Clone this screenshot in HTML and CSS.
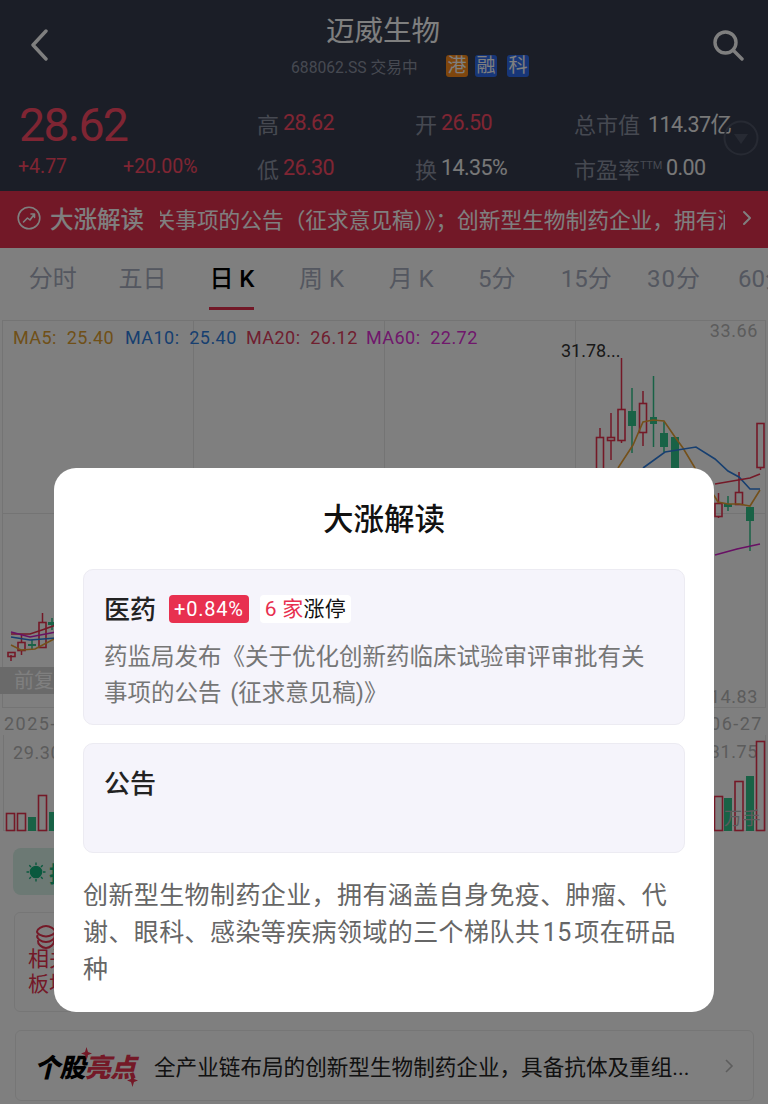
FILE: index.html
```html
<!DOCTYPE html>
<html lang="zh-CN">
  <head>
    <meta charset="UTF-8" />
    <meta name="viewport" content="width=device-width, initial-scale=1.0" />
    <title>迈威生物</title>
    <link rel="stylesheet" href="styles.css">
  </head>
  <body>
    <div class="page">
      <header class="top">
        <div class="nav">
          <svg class="nav-back" width="18" height="32" viewBox="0 0 18 32">
            <path d="M16 2 L3 16 L16 30" />
          </svg>
          <div class="nav-center">
            <div class="stock-name">迈威生物</div>
            <div class="stock-sub">
              <span class="stock-code">688062.SS 交易中</span>
              <span class="tag tag-orange">港</span>
              <span class="tag tag-blue">融</span>
              <span class="tag tag-blue tag-last">科</span>
            </div>
          </div>
          <svg class="nav-search" width="32" height="32" viewBox="0 0 32 32">
            <circle cx="13.5" cy="13.5" r="10.5" />
            <path d="M21 21 L30 30" />
          </svg>
        </div>
        <div class="quote">
          <div class="quote-main">
            <div class="price">28.62</div>
            <div class="change">
              <span>+4.77</span>
              <span>+20.00%</span>
            </div>
          </div>
          <div class="quote-stats">
            <div class="stat"><span class="stat-label">高</span><span class="stat-red">28.62</span></div>
            <div class="stat"><span class="stat-label">开</span><span class="stat-red">26.50</span></div>
            <div class="stat stat-wide"><span class="stat-label">总市值</span><span class="stat-plain">114.37亿</span></div>
            <div class="stat"><span class="stat-label">低</span><span class="stat-red">26.30</span></div>
            <div class="stat"><span class="stat-label">换</span><span class="stat-plain">14.35%</span></div>
            <div class="stat"><span class="stat-label">市盈率<sup class="ttm">TTM</sup></span><span class="stat-plain">0.00</span></div>
          </div>
          <svg class="quote-toggle" width="36" height="36" viewBox="0 0 36 36">
            <circle cx="18" cy="18" r="16.5" />
            <path d="M11 14 H25 L18 24 Z" />
          </svg>
        </div>
      </header>

      <div class="banner">
        <svg class="banner-icon" width="24" height="24" viewBox="0 0 24 24">
          <circle cx="12" cy="12" r="10.8" />
          <path d="M6.5 16 L10.5 12 L13 14 L17 8.5 M14 8 L17.5 8 L17.5 11.5" />
        </svg>
        <span class="banner-title">大涨解读</span>
        <div class="banner-ticker">
          <span class="banner-text">关事项的公告（征求意见稿）》；创新型生物制药企业，拥有涵盖</span>
        </div>
        <svg class="banner-arrow" width="10" height="16" viewBox="0 0 10 16">
          <path d="M2 2 L8 8 L2 14" />
        </svg>
      </div>

      <nav class="tabs">
        <span class="tab">分时</span>
        <span class="tab">五日</span>
        <span class="tab tab-active">日 K</span>
        <span class="tab">周 K</span>
        <span class="tab">月 K</span>
        <span class="tab tab-five">5分</span>
        <span class="tab">15分</span>
        <span class="tab tab-thirty">30分</span>
        <span class="tab">60分</span>
      </nav>

      <!-- viewBox starts at 316 so chart points read as page coordinates -->
      <svg class="chart" width="768" height="520" viewBox="0 316 768 520">
        <g class="grid">
          <rect x="2.5" y="320.5" width="763" height="387" />
          <path d="M193.5 320 V708 M384.5 320 V708 M575.5 320 V708 M2 513.5 H766" />
          <path d="M3.5 735 V830 M765.5 735 V830 M3 830.5 H766" />
        </g>

        <text class="legend ma5" x="13" y="344">MA5:  25.40</text>
        <text class="legend ma10" x="125" y="344">MA10:  25.40</text>
        <text class="legend ma20" x="246" y="344">MA20:  26.12</text>
        <text class="legend ma60" x="366" y="344">MA60:  22.72</text>
        <text class="axis" x="758" y="337" text-anchor="end">33.66</text>
        <text class="peak" x="561" y="357">31.78...</text>
        <text class="axis" x="758" y="703" text-anchor="end">14.83</text>

        <g class="up">
          <path d="M600 428 V437 M600 470 V480 M611 413 V437 M611 440 V460 M621.5 358 V409 M621.5 440 V443 M643 391 V403 M643 432 V446 M718.5 493 V503 M718.5 516 V518 M739 472 V492 M739 504 V505 M760.5 467 V470" />
          <rect x="596.5" y="437.5" width="7" height="42" />
          <rect x="607.5" y="437.5" width="7" height="3" />
          <rect x="618" y="409.5" width="7" height="31" />
          <rect x="639.5" y="403.5" width="7" height="29" />
          <rect x="715" y="503.5" width="7" height="13" />
          <rect x="735.5" y="492.5" width="7" height="12" />
          <rect x="757" y="423.5" width="7" height="44" />
          <path d="M11 655 V661 M21.5 635 V642 M21.5 650 V655 M42.5 613 V622" />
          <rect x="8" y="652.5" width="7" height="4" />
          <rect x="18" y="642.5" width="7" height="8" />
          <rect x="39" y="622.5" width="7" height="25" />
        </g>
        <g class="down">
          <path d="M632 388 V453 M653.5 376 V447 M664 422 V452 M728 496 V511 M750 507 V551 M32 640 V650 M52 618 V630" />
          <rect x="628" y="411" width="8" height="15" />
          <rect x="650" y="417" width="7" height="7" />
          <rect x="660" y="433" width="8" height="14" />
          <rect x="671" y="437" width="8" height="45" />
          <rect x="724" y="504" width="8" height="3" />
          <rect x="746" y="507" width="8" height="14" />
          <rect x="28" y="644" width="8" height="2" />
          <rect x="48" y="622" width="8" height="3" />
        </g>

        <polyline class="line ma5" points="618,468 633,445 643,422 653,420 664,421 675,437 683,448 695,468 715,497 718,502 728,504 739,504 750,506 760,490" />
        <polyline class="line ma10" points="643,468 665,452 696,447 715,459 728,471 739,477 750,489 760,489" />
        <polyline class="line ma20" points="715,484 750,478 760,474" />
        <polyline class="line ma60" points="715,555 737,549 760,544" />
        <polyline class="line ma5" points="11,645 21,650 35,649 56,638" />
        <polyline class="line ma20" points="11,634 30,634 42,630 56,625" />
        <polyline class="line ma10" points="11,637 30,640 56,638" />
        <polyline class="line ma60" points="11,632 30,637 56,632" />

        <rect class="fq-strip" x="0" y="667" width="60" height="27" />
        <text class="fq-text" x="14" y="688">前复权</text>

        <text class="axis date" x="4" y="730">2025-03-11</text>
        <text class="axis date" x="763" y="730" text-anchor="end">06-27</text>
        <text class="axis" x="13" y="759">29.30</text>
        <text class="axis" x="758" y="758" text-anchor="end">31.75</text>

        <g class="up">
          <rect x="6.5" y="813.5" width="8" height="17" />
          <rect x="17.5" y="813.5" width="8" height="17" />
          <rect x="38.5" y="795.5" width="8" height="35" />
          <rect x="714.5" y="796.5" width="8" height="34" />
          <rect x="735" y="781.5" width="8" height="49" />
          <rect x="756.5" y="741.5" width="8" height="89" />
        </g>
        <g class="down">
          <rect x="28" y="817" width="8" height="14" />
          <rect x="49" y="812" width="8" height="19" />
          <rect x="724" y="798" width="8" height="33" />
          <rect x="746" y="776" width="8" height="55" />
        </g>
        <text class="axis" x="724" y="825">万手</text>
      </svg>

      <div class="hint">
        <svg width="20" height="20" viewBox="0 0 20 20">
          <circle cx="10" cy="10" r="5.6" />
          <path d="M10 0.5 V3 M10 17 V19.5 M0.5 10 H3 M17 10 H19.5 M3.3 3.3 L5 5 M15 15 L16.7 16.7 M3.3 16.7 L5 15 M15 5 L16.7 3.3" />
        </svg>
        <span>技术指标</span>
      </div>

      <div class="related">
        <svg width="22" height="26" viewBox="0 0 22 26">
          <path d="M11 2 C15 2 20 5 20 7.5 C20 10 15 12.5 11 12.5 C7 12.5 2 10 2 7.5 C2 5 7 2 11 2 Z" />
          <path d="M2.5 11.5 C1 14 6 18 11 18 C16 18 21 14 19.5 11.5" />
          <path d="M3 17 C2.5 20 7 24 11 24 C15 24 19.5 20 19 17" />
        </svg>
        <div class="related-name">相关<br>板块</div>
      </div>

      <div class="highlight">
        <div class="highlight-logo">
          <span class="logo-black">个股</span><span class="logo-red">亮点</span>
          <svg class="spark spark-a" width="11" height="13" viewBox="0 0 11 13"><path d="M5.5 0 L7 5 L11 6.5 L7 8 L5.5 13 L4 8 L0 6.5 L4 5 Z" /></svg>
          <svg class="spark spark-b" width="11" height="13" viewBox="0 0 11 13"><path d="M5.5 0 L7 5 L11 6.5 L7 8 L5.5 13 L4 8 L0 6.5 L4 5 Z" /></svg>
        </div>
        <span class="highlight-text">全产业链布局的创新型生物制药企业，具备抗体及重组...</span>
        <svg class="highlight-arrow" width="10" height="16" viewBox="0 0 10 16">
          <path d="M2 2 L8 8 L2 14" />
        </svg>
      </div>

      <div class="scrim">
        <div class="modal">
          <h2 class="modal-title">大涨解读</h2>
          <div class="reason reason-sector">
            <div class="reason-head">
              <span class="reason-name">医药</span>
              <span class="pct-badge">+0.84%</span>
              <span class="limit-badge"><em>6 家</em>涨停</span>
            </div>
            <p class="reason-desc">药监局发布《关于优化创新药临床试验审评审批有关事项的公告 (征求意见稿)》</p>
          </div>
          <div class="reason reason-notice">
            <div class="reason-head">
              <span class="reason-name">公告</span>
            </div>
          </div>
          <p class="modal-text">创新型生物制药企业，拥有涵盖自身免疫、肿瘤、代谢、眼科、感染等疾病领域的三个梯队共 15 项在研品种</p>
        </div>
      </div>
    </div>
  </body>
</html>
```
FILE: styles.css
```css
* {
  box-sizing: border-box;
}

body {
  margin: 0;
  background: #fff;
  font-family: Roboto, "Noto Sans CJK SC", sans-serif;
}

.page {
  position: relative;
  width: 768px;
  height: 1104px;
  overflow: hidden;
}

/* header */
.top {
  height: 191px;
  background: #363c4e;
}

.nav {
  display: flex;
  height: 100px;
  padding: 0 24px 0 30px;
}

.nav svg {
  flex-shrink: 0;
  margin-top: 29px;
  fill: none;
  stroke: #fff;
  stroke-width: 3.4;
  stroke-linecap: round;
  stroke-linejoin: round;
}

.nav-center {
  flex: 1;
}

.stock-name {
  padding-left: 6px;
  margin-top: 9px;
  color: #fff;
  font-size: 28.5px;
  line-height: 46px;
  text-align: center;
}

.stock-sub {
  display: flex;
  align-items: center;
  height: 22px;
  margin-left: 243px;
}

.stock-code {
  width: 155px;
  color: #8d93a3;
  font-size: 15.7px;
  white-space: nowrap;
}

.tag {
  width: 22px;
  height: 22px;
  margin-right: 7px;
  border-radius: 3px;
  color: #fff;
  font-size: 19px;
  line-height: 22px;
  text-align: center;
}

.tag-orange {
  background: #ff8c1a;
}

.tag-blue {
  background: #2f6cf0;
}

.tag-last {
  margin-left: 3px;
}

.quote {
  position: relative;
  display: flex;
  height: 91px;
  padding-left: 18px;
}

.quote-main {
  width: 239px;
}

.price {
  padding-left: 1px;
  color: #ff4b66;
  font-size: 46.5px;
  line-height: 50px;
  letter-spacing: -1.7px;
}

.change {
  display: flex;
  gap: 56px;
  color: #ff4b66;
  font-size: 19.5px;
  line-height: 34px;
}

.quote-stats {
  display: grid;
  grid-template-columns: 158px 159px 1fr;
  grid-auto-rows: 45px;
  flex: 1;
  min-width: 0;
  white-space: nowrap;
}

.stat {
  display: flex;
  align-items: center;
  gap: 4px;
  font-size: 21.5px;
  letter-spacing: -0.6px;
}

.stat-wide {
  gap: 8px;
}

.stat-label {
  color: #8d93a3;
  font-size: 22px;
  letter-spacing: 0;
}

.stat-red {
  color: #ff4b66;
}

.stat-plain {
  color: #f0f0f0;
}

.ttm {
  font-size: 11px;
  line-height: 0;
  letter-spacing: -0.3px;
  vertical-align: 9px;
}

.quote-toggle {
  position: absolute;
  top: 20px;
  left: 723px;
  fill: none;
  stroke: #4f5567;
  stroke-width: 2;
}

.quote-toggle path {
  fill: #4f5567;
  stroke: none;
}

/* red strip under the quote */
.banner {
  display: flex;
  align-items: center;
  height: 57px;
  padding: 0 0 3px 17px;
  background: #e4304f;
  color: #fff;
}

.banner svg {
  flex-shrink: 0;
  fill: none;
  stroke: #fff;
  stroke-width: 1.6;
  stroke-linecap: round;
  stroke-linejoin: round;
}

.banner-title {
  margin-left: 9px;
  width: 110px;
  font-size: 23.5px;
  font-weight: 500;
  white-space: nowrap;
}

.banner-ticker {
  width: 565px;
  overflow: hidden;
  white-space: nowrap;
  font-size: 21.7px;
}

.banner-text {
  display: block;
  margin-left: -6.5px;
}

.banner-arrow {
  margin-left: 17px;
  stroke-width: 2 !important;
}

/* period tabs */
.tabs {
  display: flex;
  height: 68px;
  padding: 0 0 0 8px;
  white-space: nowrap;
}

.tab {
  flex: 0 0 89.6px;
  padding-top: 13px;
  color: #a8aec0;
  font-size: 24px;
  line-height: 36px;
  text-align: center;
}

.tab-five {
  margin-left: -4px;
}

.tab-thirty {
  margin-left: -2px;
  letter-spacing: 1px;
}

.tab-active {
  position: relative;
  color: #000;
  font-weight: 500;
}

.tab-active::after {
  content: "";
  position: absolute;
  left: 22px;
  right: 23px;
  top: 59px;
  height: 3px;
  background: #e4304f;
}

/* candlestick chart */
.chart {
  display: block;
}

.grid {
  fill: none;
  stroke: #e8e8e8;
  stroke-width: 1;
}

.chart text {
  font-size: 18px;
}

.legend {
  letter-spacing: 0.45px;
  white-space: pre;
}

.legend.ma5 {
  fill: #e0a030;
}

.legend.ma10 {
  fill: #2f7fe0;
}

.legend.ma20 {
  fill: #e0405f;
}

.legend.ma60 {
  fill: #e030d8;
}

.chart .axis {
  fill: #b8b8b8;
  letter-spacing: 0.6px;
}

.chart .date {
  letter-spacing: 1.5px;
}

.chart .peak {
  fill: #333;
}

.up rect {
  fill: none;
  stroke: #e8324f;
  stroke-width: 1.6;
}

.up path {
  fill: none;
  stroke: #e8324f;
  stroke-width: 1.5;
}

.down rect {
  fill: #33c48d;
}

.down path {
  fill: none;
  stroke: #33c48d;
  stroke-width: 1.5;
}

.line {
  fill: none;
  stroke-width: 1.6;
}

.line.ma5 {
  stroke: #e8a034;
}

.line.ma10 {
  stroke: #2f7fe0;
}

.line.ma20 {
  stroke: #e8324f;
}

.line.ma60 {
  stroke: #d020c8;
}

.fq-strip {
  fill: #d4d4d4;
}

.chart .fq-text {
  fill: #fff;
  font-size: 20px;
}

/* rows below the chart */
.hint {
  display: flex;
  align-items: center;
  gap: 3px;
  width: 200px;
  height: 47px;
  margin: 12px 0 0 13px;
  padding-left: 13px;
  border-radius: 8px;
  background: #d8f2e8;
  color: #14b27c;
  font-size: 22px;
  font-weight: 700;
}

.hint svg {
  fill: #14b27c;
  stroke: #14b27c;
  stroke-width: 1.4;
}

.related {
  display: flex;
  flex-direction: column;
  align-items: flex-start;
  width: 200px;
  height: 100px;
  margin: 17px 0 0 14px;
  padding: 11px 0 0 13px;
  border: 1px solid #ededed;
  border-radius: 6px;
  color: #e8324f;
}

.related svg {
  margin-left: 7px;
  fill: none;
  stroke: #e8324f;
  stroke-width: 2;
  stroke-linejoin: round;
  stroke-linecap: round;
}

.related-name {
  margin-top: -3px;
  font-size: 21px;
  line-height: 25px;
}

.highlight {
  display: flex;
  align-items: center;
  width: 739px;
  height: 71px;
  margin: 18px 0 0 15px;
  padding-left: 18px;
  border: 1px solid #ededed;
  border-radius: 6px;
}

.highlight-logo {
  position: relative;
  width: 120px;
  flex-shrink: 0;
  font-size: 26px;
  font-weight: 900;
  font-style: italic;
  letter-spacing: -0.6px;
  white-space: nowrap;
}

.logo-black {
  color: #000;
}

.logo-red {
  color: #e8324f;
}

.spark {
  position: absolute;
  fill: #e8324f;
}

.spark-a {
  left: 47px;
  top: 0;
}

.spark-b {
  left: 93px;
  top: 27px;
}

.highlight-text {
  width: 570px;
  flex-shrink: 0;
  color: #222;
  font-size: 21.6px;
  white-space: nowrap;
}

.highlight-arrow {
  fill: none;
  stroke: #bbb;
  stroke-width: 1.6;
}

/* dialog over the dimmed page */
.scrim {
  position: absolute;
  top: 0;
  right: 0;
  bottom: 0;
  left: 0;
  display: flex;
  justify-content: center;
  padding-top: 468px;
  background: rgba(0, 0, 0, 0.5);
}

.modal {
  width: 660px;
  height: 544px;
  padding: 0 29px;
  border-radius: 22px;
  background: #fff;
}

.modal-title {
  margin: 0;
  padding-top: 29px;
  color: #111;
  font-size: 30.5px;
  font-weight: 500;
  line-height: 46px;
  text-align: center;
}

.reason {
  margin-bottom: 18px;
  padding: 18px 20px 0;
  border: 1px solid #ecebf2;
  border-radius: 10px;
  background: #f5f4fb;
}

.reason-sector {
  height: 156px;
  margin-top: 26px;
}

.reason-notice {
  height: 110px;
}

.reason-head {
  display: flex;
  align-items: center;
  gap: 13px;
  height: 38px;
}

.reason-name {
  color: #222;
  font-size: 26px;
  font-weight: 500;
}

.pct-badge {
  height: 28px;
  margin-top: 4px;
  padding: 0 5px;
  border-radius: 4px;
  background: #e8304f;
  color: #fff;
  font-size: 20px;
  line-height: 28px;
  letter-spacing: 0.8px;
}

.limit-badge {
  height: 28px;
  margin: 4px 0 0 -2px;
  padding: 0 5px;
  border-radius: 4px;
  background: #fff;
  color: #111;
  font-size: 21px;
  line-height: 28px;
  letter-spacing: 0.2px;
}

.limit-badge em {
  color: #e8304f;
  font-style: normal;
}

.reason-desc {
  margin: 13px 0 0;
  color: #767676;
  font-size: 23.5px;
  line-height: 36px;
  word-spacing: 3px;
}

.modal-text {
  margin: 24px 0 0;
  color: #666;
  font-size: 25px;
  line-height: 37px;
  letter-spacing: 0.4px;
  word-spacing: -4px;
}
```
